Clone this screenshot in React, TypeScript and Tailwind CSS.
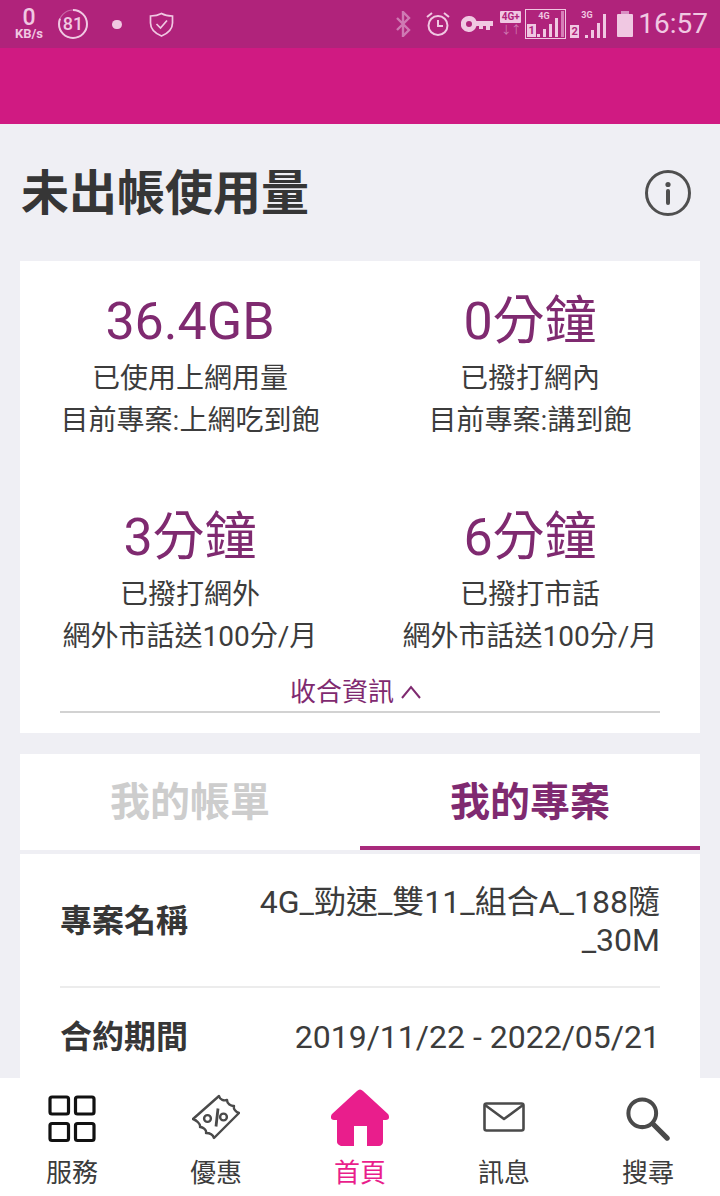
import React from "react";

function Stat({ big, label, sub }: { big: string; label: string; sub: string }) {
  return (
    <div className="flex flex-col items-center">
      <div className="text-[52px] leading-[60px] text-[#7f2a70]">{big}</div>
      <div className="text-[28px] leading-[42px] mt-[6px] text-[#3c3c3c]">{label}</div>
      <div className="text-[28px] leading-[42px] text-[#3c3c3c]">{sub}</div>
    </div>
  );
}

function Signal({ n, label, framed }: { n: string; label: string; framed?: boolean }) {
  const bars = framed
    ? [
        { x: 1, h: 3 },
        { x: 7, h: 8 },
        { x: 13, h: 13 },
        { x: 19, h: 19 },
        { x: 25, h: 26, dim: true },
      ]
    : [
        { x: 7, h: 3 },
        { x: 13, h: 8 },
        { x: 19, h: 15 },
        { x: 25, h: 24 },
      ];
  return (
    <div className={`relative h-[30px] ${framed ? "w-[41px] border border-[#f0c8e2]" : "w-[38px]"}`}>
      <span className="absolute top-[1px] left-[12px] text-[9px] leading-[10px] font-bold text-[#f0c8e2]">{label}</span>
      <svg className="absolute bottom-[1px] right-0" width="29" height="27" viewBox="0 0 29 27">
        {bars.map((b) => (
          <rect key={b.x} x={b.x} y={27 - b.h} width="3" height={b.h} fill={b.dim ? "#d77fb8" : "#f0c8e2"} />
        ))}
      </svg>
      <span className="absolute bottom-[1px] left-[1px] w-[9px] h-[13px] bg-[#f0c8e2] text-[#b0237b] text-[11px] leading-[13px] font-bold text-center">{n}</span>
    </div>
  );
}

function StatusBar() {
  return (
    <div className="h-[48px] bg-[#b0237b] flex items-center text-[#f0c8e2] shrink-0">
      <div className="w-[30px] ml-[14px] flex flex-col items-center font-bold">
        <span className="text-[23px] leading-[20px] font-medium">0</span>
        <span className="text-[13px] leading-[12px]">KB/s</span>
      </div>
      <div className="relative ml-[14px] w-[30px] h-[30px] flex items-center justify-center">
        <svg className="absolute inset-0 -rotate-90" width="30" height="30" viewBox="0 0 30 30" fill="none">
          <circle cx="15" cy="15" r="14" stroke="#c86aa8" strokeWidth="1.2" />
          <circle cx="15" cy="15" r="14" stroke="#f0c8e2" strokeWidth="2" strokeDasharray="71 88" />
        </svg>
        <span className="relative text-[18px] font-medium leading-none">81</span>
      </div>
      <div className="ml-[24px] w-[10px] h-[9px] rounded-full bg-[#f0c8e2]" />
      <svg className="ml-[27px]" width="25" height="25" viewBox="0 0 25 25" fill="none" stroke="#f0c8e2" strokeWidth="1.7">
        <path d="M12.5 1.5 C16 3.5 20 4 23.5 4 V11 C23.5 17 18.5 21.5 12.5 24 C6.5 21.5 1.5 17 1.5 11 V4 C5 4 9 3.5 12.5 1.5 Z" />
        <path d="M7.5 12 L11.5 16 L18 8.5" />
      </svg>
      <div className="flex-1" />
      <svg width="16" height="26" viewBox="0 0 16 26" fill="none" stroke="#cf79b3" strokeWidth="2.4">
        <path d="M2 7 L14 19 L8 25 V1 L14 7 L2 19" />
      </svg>
      <svg className="ml-[14px]" width="26" height="26" viewBox="0 0 26 26" fill="none" stroke="#f0c8e2" strokeWidth="2">
        <circle cx="13" cy="14.5" r="9.5" />
        <path d="M13 9 V15 H18" />
        <path d="M2 6 L7 2 M24 6 L19 2" />
      </svg>
      <svg className="ml-[10px]" width="32" height="16" viewBox="0 0 32 16" fill="#f0c8e2">
        <path fillRule="evenodd" d="M8 0 A8 8 0 0 1 15.5 5 H32 V10 H29 V14 H25 V10 H22 V13 H18 V10 H15.5 A8 8 0 1 1 8 0 Z M8 5 A3 3 0 1 0 8 11 A3 3 0 1 0 8 5 Z" />
      </svg>
      <div className="ml-[7px] w-[21px] flex flex-col items-center">
        <span className="w-[21px] h-[12px] bg-[#f0c8e2] text-[#b0237b] text-[10px] leading-[12px] font-bold text-center rounded-[1px]">4G+</span>
        <span className="text-[#cf79b3] text-[11px] leading-[12px] mt-[2px] tracking-[-1px]">↓↑</span>
      </div>
      <div className="ml-[4px]"><Signal n="1" label="4G" framed /></div>
      <div className="ml-[3px]"><Signal n="2" label="3G" /></div>
      <div className="ml-[10px] w-[16px] h-[23px] mt-[3px] bg-[#f0c8e2] rounded-[1px] relative">
        <div className="absolute -top-[3px] left-[4px] w-[8px] h-[3px] bg-[#d98fc3]" />
      </div>
      <span className="ml-[5px] mr-[12px] text-[28px] leading-none text-[#f0c8e2]">16:57</span>
    </div>
  );
}

function NavItem({ label, active, children }: { label: string; active?: boolean; children: React.ReactNode }) {
  return (
    <div className="flex flex-col items-center">
      <div className="h-[68px] flex items-end justify-center">{children}</div>
      <span className={`text-[26px] leading-[36px] mt-[9px] ${active ? "text-[#e91e8c]" : "text-[#3c3c3c]"}`}>{label}</span>
    </div>
  );
}

export default function App() {
  return (
    <div
      className="w-[720px] h-[1196px] flex flex-col overflow-hidden bg-[#efeff4]"
      style={{ fontFamily: 'Roboto, "Noto Sans CJK TC", sans-serif' }}
    >
      <StatusBar />
      <div className="h-[76px] bg-[#d01a82] shrink-0" />
      <main className="flex-1 min-h-0 overflow-hidden px-[20px]">
        <div className="h-[137px] flex items-center justify-between pl-[1px] pr-[9px] pt-[2px]">
          <h1 className="text-[48px] leading-none font-bold text-[#363636]">未出帳使用量</h1>
          <svg className="-mt-[1px]" width="46" height="46" viewBox="0 0 46 46" fill="none" stroke="#4f4f4f">
            <circle cx="23" cy="23" r="21.5" strokeWidth="3" />
            <circle cx="23" cy="14.5" r="2.6" fill="#4f4f4f" stroke="none" />
            <path d="M23 21 V33" strokeWidth="4" strokeLinecap="round" />
          </svg>
        </div>

        <section className="bg-white h-[472px] px-[40px] pt-[31px]">
          <div className="grid grid-cols-2 -mx-[40px] gap-y-[66px]">
            <Stat big="36.4GB" label="已使用上網用量" sub="目前專案:上網吃到飽" />
            <Stat big="0分鐘" label="已撥打網內" sub="目前專案:講到飽" />
            <Stat big="3分鐘" label="已撥打網外" sub="網外市話送100分/月" />
            <Stat big="6分鐘" label="已撥打市話" sub="網外市話送100分/月" />
          </div>
          <div className="h-[40px] mt-[15px] pr-[8px] flex items-center justify-center text-[26px] leading-none text-[#7f2a70] border-b-2 border-[#d2d2d2]">
            <span>收合資訊</span>
            <svg className="ml-[6px]" width="22" height="16" viewBox="0 0 22 16" fill="none" stroke="#7f2a70" strokeWidth="2">
              <path d="M2 14 L11 3 L20 14" />
            </svg>
          </div>
        </section>

        <section className="mt-[21px] bg-white">
          <div className="grid grid-cols-2 h-[100px] border-b-4 border-[#efeff4]">
            <div className="flex items-center justify-center pt-[2px] text-[40px] font-bold text-[#cdcdcd]">我的帳單</div>
            <div className="flex items-center justify-center pt-[6px] text-[40px] font-bold text-[#7f2a70] border-b-4 border-[#a92a7c]">我的專案</div>
          </div>
          <div className="px-[40px]">
            <div className="flex items-center justify-between h-[134px] pt-[2px] border-b-2 border-[#ececec]">
              <span className="text-[32px] font-bold text-[#363636] shrink-0">專案名稱</span>
              <span className="w-[410px] text-right text-[32px] leading-[38px] text-[#3c3c3c]">4G_勁速_雙11_組合A_188隨<br />_30M</span>
            </div>
            <div className="flex items-center justify-between h-[98px]">
              <span className="text-[32px] font-bold text-[#363636]">合約期間</span>
              <span className="text-[32px] text-[#3c3c3c]">2019/11/22 - 2022/05/21</span>
            </div>
          </div>
        </section>
      </main>

      <nav className="h-[118px] bg-white shrink-0 grid grid-cols-5">
        <NavItem label="服務">
          <svg className="mb-[3px]" width="48" height="48" viewBox="0 0 48 48" fill="none" stroke="#111" strokeWidth="3.2">
            <rect x="2" y="2" width="18.5" height="17" rx="2" />
            <rect x="27.5" y="2" width="18.5" height="17" rx="2" />
            <rect x="2" y="28.5" width="18.5" height="17" rx="2" />
            <rect x="27.5" y="28.5" width="18.5" height="17" rx="2" />
          </svg>
        </NavItem>
        <NavItem label="優惠">
          <svg className="mb-[6px]" width="48" height="46" viewBox="0 0 48 46" fill="none" stroke="#4a4a4a" strokeWidth="2.4" strokeLinejoin="round">
            <path d="M1 25 L27 2 C28 6 32 7 35 6 C35 10 39 12 42 12 C41 15 44 18 47 19 L22 44 C21 41 18 39 14 39 C15 36 11 33 8 33 C9 30 4 26 1 25 Z" />
            <circle cx="15.5" cy="24.5" r="3.4" />
            <circle cx="31.5" cy="23" r="3.4" />
            <path d="M26 14.5 L24 32.5" strokeWidth="2.8" />
          </svg>
        </NavItem>
        <NavItem label="首頁" active>
          <svg width="60" height="58" viewBox="0 0 60 58" fill="#e91e8c">
            <path d="M27 3 Q30 0 33 3 L58 26 C60 29 59 32 56 32 L53 32 V54 C53 56 51 58 49 58 H37 V38 H24 V58 H12 C10 58 7 56 7 54 V32 L4 32 C1 32 0 29 2 26 Z" />
          </svg>
        </NavItem>
        <NavItem label="訊息">
          <svg className="mb-[14px]" width="42" height="30" viewBox="0 0 42 30" fill="none" stroke="#4a4a4a" strokeWidth="2.6" strokeLinejoin="round">
            <rect x="1.5" y="1.5" width="39" height="27" rx="2" />
            <path d="M2 3 L21 17 L40 3" />
          </svg>
        </NavItem>
        <NavItem label="搜尋">
          <svg className="mb-[5px]" width="44" height="44" viewBox="0 0 46 46" fill="none" stroke="#4a4a4a">
            <circle cx="17" cy="17" r="14.5" strokeWidth="4.2" />
            <path d="M28 28 L43 43" strokeWidth="5.4" strokeLinecap="round" />
          </svg>
        </NavItem>
      </nav>
    </div>
  );
}
